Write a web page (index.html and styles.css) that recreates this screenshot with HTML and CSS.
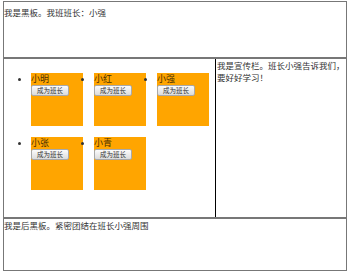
FILE: index.html
```html
<!DOCTYPE html>
<html lang="zh">
<head>
  <meta charset="UTF-8" />
  <title>班级</title>
  <link rel="stylesheet" href="styles.css">
</head>
<body>
  <div class="header">我是黑板。我班班长：小强</div>

  <div class="middle">
    <div class="main">
      <ul class="students">
        <li><div class="name">小明</div><button>成为班长</button></li>
        <li><div class="name">小红</div><button>成为班长</button></li>
        <li><div class="name">小强</div><button>成为班长</button></li>
        <li><div class="name">小张</div><button>成为班长</button></li>
        <li><div class="name">小青</div><button>成为班长</button></li>
      </ul>
    </div>
    <div class="aside">我是宣传栏。班长小强告诉我们，要好好学习！</div>
  </div>

  <div class="footer">我是后黑板。紧密团结在班长小强周围</div>
</body>
</html>
```

FILE: styles.css
```css
body {
  margin: 1px 4px 0 3px;
  font-family: "Noto Sans CJK SC", sans-serif;
  font-size: 8.5px;
  line-height: 12px;
  color: #333;
}

.header {
  height: 51px;
  padding-top: 4px;
  border: 1px solid #777;
}

.middle {
  display: flex;
  height: 158px;
  border: 1px solid #777;
}

.main {
  flex: 0 0 211px;
}

.students {
  display: flex;
  flex-wrap: wrap;
  gap: 11px;
  margin: 14px 0 0;
  padding-left: 27px;
}

.students li {
  display: list-item;
  width: 52px;
  height: 53px;
  background: orange;
  font-size: 9px;
}

.name {
  height: 12px;
  line-height: 12px;
  color: #4a3000;
}

.students button {
  display: block;
  height: 11px;
  padding: 0 5px;
  font-family: "Noto Sans CJK SC", sans-serif;
  font-size: 6.5px;
  line-height: 9px;
  color: #333;
  background: linear-gradient(#fbfbfb, #dcdcdc);
  border: 1px solid #a9a9a9;
  border-radius: 2px;
}

.aside {
  flex: 1;
  border-left: 1px solid #000;
  padding-left: 1px;
}

.footer {
  height: 51px;
  border: 1px solid #777;
}
```
